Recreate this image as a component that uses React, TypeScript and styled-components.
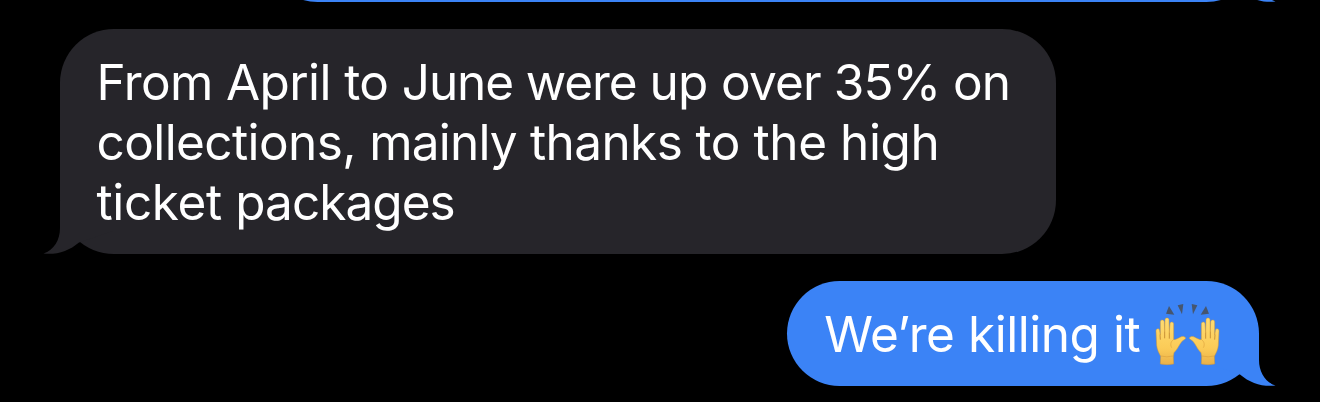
import React from 'react';
import styled, { createGlobalStyle } from 'styled-components';

const INCOMING = '#26252a';
const OUTGOING = '#3b83f6';

const GlobalStyle = createGlobalStyle`
  body {
    margin: 0;
    background: #000;
    overflow: hidden;
  }
`;

const Thread = styled.main`
  box-sizing: border-box;
  width: 1320px;
  height: 402px;
  padding: 0 61px 16px 60px;
  display: flex;
  flex-direction: column;
  justify-content: flex-end;
  gap: 27px;
  overflow: hidden;
  background: #000;
  font-family: Inter, 'Liberation Sans', sans-serif;
`;

const Bubble = styled.div<{ $own?: boolean; $width: number; $height: number }>`
  position: relative;
  isolation: isolate;
  box-sizing: border-box;
  flex: none;
  align-self: ${(p) => (p.$own ? 'flex-end' : 'flex-start')};
  width: ${(p) => p.$width}px;
  height: ${(p) => p.$height}px;
  padding: 23px 36px 0 ${(p) => (p.$own ? 37.25 : 36.5)}px;
  border-radius: ${(p) => (p.$own ? 52.5 : 54)}px;
  background: ${(p) => (p.$own ? OUTGOING : INCOMING)};
  color: #fff;
`;

const TailShape = styled.svg<{ $own?: boolean }>`
  position: absolute;
  z-index: -1;
  bottom: 0;
  ${(p) => (p.$own ? 'right: -17px;' : 'left: -17px; transform: scaleX(-1);')}
  width: 70px;
  height: 53px;
`;

const Line = styled.div`
  display: flex;
  align-items: center;
  height: 60px;
  white-space: pre;
  font-size: 49.5px;
  line-height: 60px;
`;

const Run = styled.span<{ $tracking: number }>`
  letter-spacing: ${(p) => p.$tracking}px;
`;

const Emoji = styled.svg`
  flex: none;
  width: 65px;
  height: 64px;
  margin-left: 15px;
`;

function Tail({ own }: { own?: boolean }) {
  const fill = own ? OUTGOING : INCOMING;
  return (
    <TailShape $own={own} viewBox="0 0 70 53" aria-hidden="true">
      <path d="M0 0H53V27C53 39 59 49 69.5 52.6C56 54 44 50 34 41.5L0 30Z" fill={fill} />
    </TailShape>
  );
}

function Hand() {
  return (
    <g>
      <path
        d="M64 224L65 201C60 192 54 181 53 168L51 125C51 117 61 116 62 124L64 137L64 98C64 90 75 90 76 98L77 126L78 92C78 84 90 84 90 92L91 129L93 103C94 96 104 97 104 104L104 151C111 151 117 147 125 143C131 140 139 142 140 146C140 149 135 151 131 154C121 163 117 179 105 190L103 202L104 224Q84 228 64 224Z"
        fill="url(#skin)"
        stroke="#cf9638"
        strokeWidth="1.5"
      />
      <path d="M63 136L64 151M77 126V147M91 129V148" fill="none" stroke="#bd842f" strokeWidth="2.5" />
      <path d="M103 151C94 158 94 168 98 175M66 200Q83 205 102 200" fill="none" stroke="#dca23d" strokeWidth="2" />
      <path d="M90 50L106 76L81 73Z" fill="#46566f" />
      <path d="M116 48L133 44L129 75Z" fill="#46566f" />
    </g>
  );
}

function RaisedHands() {
  return (
    <Emoji viewBox="48 38 195 192" role="img" aria-label="raised hands">
      <defs>
        <linearGradient id="skin" x1="0" y1="0" x2="0" y2="1">
          <stop offset="0" stopColor="#ffdc72" />
          <stop offset="0.65" stopColor="#fbcb57" />
          <stop offset="1" stopColor="#e9b049" />
        </linearGradient>
      </defs>
      <Hand />
      <g transform="translate(291 0) scale(-1 1)">
        <Hand />
      </g>
    </Emoji>
  );
}

export default function App() {
  return (
    <>
      <GlobalStyle />
      <Thread>
        <Bubble $own $width={994} $height={105}>
          <Tail own />
        </Bubble>
        <Bubble $width={996} $height={225}>
          <Tail />
          <Line>
            <Run $tracking={-0.6}>From April to </Run>
            <Run $tracking={-1.1}>June </Run>
            <Run $tracking={-1.1}>were </Run>
            <Run $tracking={-0.6}>up </Run>
            <Run $tracking={-0.85}>over </Run>
            <Run $tracking={-1}>35% on</Run>
          </Line>
          <Line>
            <Run $tracking={-0.6}>collections, </Run>
            <Run $tracking={-0.8}>mainly </Run>
            <Run $tracking={-0.6}>thanks </Run>
            <Run $tracking={-0.42}>to the high</Run>
          </Line>
          <Line>
            <Run $tracking={-0.4}>ticket </Run>
            <Run $tracking={-0.95}>packages</Run>
          </Line>
        </Bubble>
        <Bubble $own $width={472} $height={105}>
          <Tail own />
          <Line>
            <Run $tracking={-0.45}>We’re killing it</Run>
            <RaisedHands />
          </Line>
        </Bubble>
      </Thread>
    </>
  );
}
